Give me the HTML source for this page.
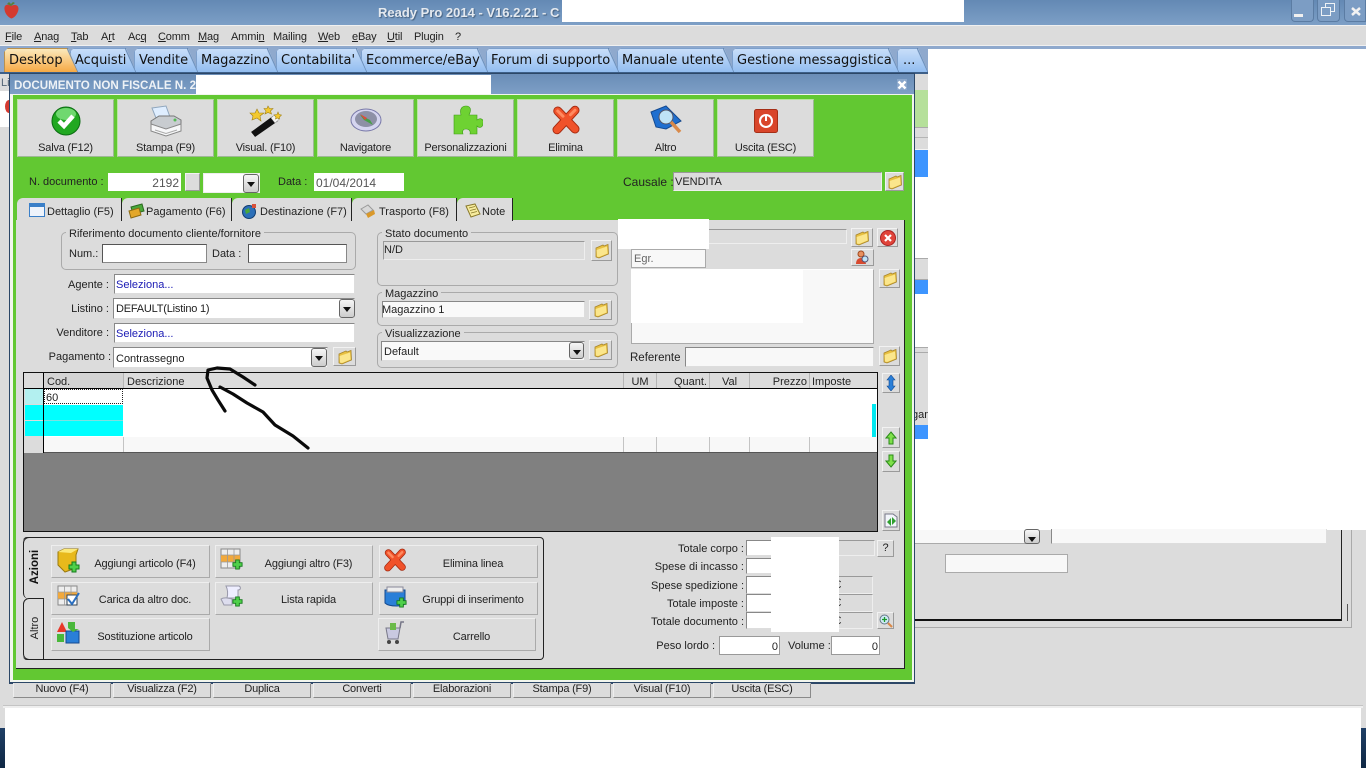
<!DOCTYPE html>
<html><head><meta charset="utf-8"><title>Ready Pro 2014</title>
<style>
html,body{margin:0;padding:0;width:1366px;height:768px;overflow:hidden;background:#dcdcdc}
body{position:relative;font:11px "Liberation Sans",sans-serif;color:#222}
div,span,svg{position:absolute;box-sizing:border-box}
.t{white-space:nowrap;line-height:14px;height:14px;margin-top:1px}
.r{text-align:right}
.c{text-align:center}
.m{top:29px;font-size:11px;letter-spacing:-.15px}
.m u{text-decoration:underline}
.tab{top:48px;height:24px;font:13px "DejaVu Sans",sans-serif;line-height:23px;color:#111;white-space:nowrap;padding-left:4px;background:linear-gradient(#c8def9,#92bdf0);border:1px solid #7da0cc;border-bottom:0;clip-path:polygon(0 100%,0 4px,4px 0,calc(100% - 10px) 0,100% 100%)}
.tab:after{content:"";position:absolute;right:-1px;top:-1px;width:11px;height:24px;background:linear-gradient(to bottom left,transparent calc(50% - 1px),#5f82ad,transparent calc(50% + 1px))}
.b{background:#dcdcdc;border:1px solid;border-color:#f2f2f2 #9a9a9a #9a9a9a #f2f2f2}
.tb{top:99px;width:97px;height:58px;background:#dcdcdc;border:1px solid;border-color:#b8e6a0 #9fb896 #9fb896 #b8e6a0}
.tb .l{left:0;right:0;top:41px;text-align:center;white-space:nowrap;line-height:14px;color:#222;letter-spacing:-.2px}
.tb svg{left:31px;top:5px}
.in{background:#fff;border:1px solid;border-color:#888 #ddd #ddd #888}
.g{background:#dcdcdc;border:1px solid;border-color:#999 #eee #eee #999}
.grp{border:1px solid #aaa;border-radius:5px}
.lab{background:#dcdcdc;padding:0 3px;white-space:nowrap;line-height:13px;height:13px;font-size:11px;margin-top:1px}
.ar{width:16px;height:19px;background:linear-gradient(#f6f6f6,#ccc);border:1px solid #666;border-radius:3px}
.ar:after{content:"";position:absolute;left:3px;top:7px;border:4px solid transparent;border-top:5px solid #111;border-bottom:0}
.dt{top:198px;height:23px;background:#dcdcdc;border-right:1px solid #222;border-radius:6px 0 0 0}
.dt .t{top:6px}
.col{top:373px;width:1px;height:15px;background:#b5b5b5}
.col2{top:437px;width:1px;height:15px;background:#c4c4c4}
.ab{height:33px;background:#dcdcdc;border:1px solid;border-color:#eee #aaa #aaa #eee}
.ab .t{top:10px;text-align:center;letter-spacing:-.15px}
.ab svg{left:3px;top:1px}
.bb{top:683px;height:15px;width:98px;background:#dcdcdc;border:1px solid;border-color:#dcdcdc #8a8a8a #8a8a8a #eee;text-align:center;line-height:10px;font-size:11px;letter-spacing:-.2px}
</style></head><body>
<svg width="0" height="0" style="position:absolute"><defs>
<symbol id="fo" viewBox="0 0 16 16"><path d="M2 5L9 2L10 3L14 1.500L14.500 11L5 15L2 14Z" fill="#e8c040" stroke="#a8862c" stroke-width=".8"/><path d="M2.500 7L13 3.500L13.500 10.500L5 14L3 13.500Z" fill="#fbe68c"/></symbol>
<symbol id="plus" viewBox="0 0 12 12"><path d="M4 1h4v3h3v4H8v3H4V8H1V4h3z" fill="#4fd04a" stroke="#157a1c"/></symbol>
<symbol id="x" viewBox="0 0 40 40"><path d="M8 33L32 7M9 8L32 32" fill="none" stroke="#a52a10" stroke-width="12" stroke-linecap="round"/><path d="M8 33L32 7M9 8L32 32" fill="none" stroke="#f0522a" stroke-width="9.500" stroke-linecap="round"/><path d="M9 8L16 15M26 13L32 7" stroke="#ff8a60" stroke-width="4" stroke-linecap="round"/></symbol>
</defs></svg>

<!-- title bar -->
<div style="left:0;top:0;width:1366px;height:25px;background:linear-gradient(#6389b4,#7d9fc6)"></div>
<svg style="left:3px;top:1px" width="17" height="18" viewBox="0 0 17 18"><path d="M8 5C3 2 1 5 1.500 8.500C2 13 6 17 8.500 17.500C11 17 15 13 15.500 8C15.500 4 12 3 8 5Z" fill="#d43a30"/><path d="M4 3L8 5L12 2L10 1L8 3L6 1Z" fill="#57803a"/></svg>
<div class="t" style="left:378px;top:4px;font:bold 13px 'Liberation Sans',sans-serif;color:#e4e9ef;text-shadow:1px 1px 1px #45607f">Ready Pro 2014 - V16.2.21 - C</div>
<div style="left:562px;top:0;width:402px;height:22px;background:#fff"></div>
<div style="left:1291px;top:0;width:23px;height:22px;border:1px solid #5b7ca3;border-top:0;border-radius:0 0 4px 4px;background:#7c9dc4"></div>
<div style="left:1294px;top:14px;width:9px;height:3px;background:#f0f0f0"></div>
<div style="left:1317px;top:0;width:23px;height:22px;border:1px solid #5b7ca3;border-top:0;border-radius:0 0 4px 4px;background:#7c9dc4"></div>
<div style="left:1325px;top:3px;width:10px;height:9px;border:1.500px solid #eef2f6"></div>
<div style="left:1321px;top:7px;width:10px;height:9px;border:1.500px solid #eef2f6;background:#7c9dc4"></div>
<div style="left:1344px;top:0;width:22px;height:22px;border:1px solid #5b7ca3;border-top:0;border-radius:0 0 0 4px;background:#7c9dc4"></div>
<svg style="left:1351px;top:7px" width="10" height="9" viewBox="0 0 10 9"><path d="M1 1L9 8M9 1L1 8" stroke="#f2f2f2" stroke-width="2.500"/></svg>

<!-- menu -->
<div style="left:0;top:25px;width:1366px;height:21px;background:#dcdcdc;border-top:1px solid #f0f0f0;border-bottom:1px solid #f0f0f0"></div>
<div style="left:0;top:46px;width:1366px;height:27px;background:#8fa9cd"></div>
<div class="t m" style="left:5px"><u>F</u>ile</div>
<div class="t m" style="left:34px"><u>A</u>nag</div>
<div class="t m" style="left:71px"><u>T</u>ab</div>
<div class="t m" style="left:101px">A<u>r</u>t</div>
<div class="t m" style="left:128px">Ac<u>q</u></div>
<div class="t m" style="left:158px"><u>C</u>omm</div>
<div class="t m" style="left:198px"><u>M</u>ag</div>
<div class="t m" style="left:231px">Ammi<u>n</u></div>
<div class="t m" style="left:273px">Mailin<u>g</u></div>
<div class="t m" style="left:318px"><u>W</u>eb</div>
<div class="t m" style="left:352px"><u>e</u>Bay</div>
<div class="t m" style="left:387px"><u>U</u>til</div>
<div class="t m" style="left:414px">Plugin</div>
<div class="t m" style="left:455px">?</div>

<!-- background window -->
<div style="left:0;top:72px;width:929px;height:2px;background:#3d5f88"></div>
<div style="left:0;top:74px;width:929px;height:631px;background:#dcdcdc"></div>
<div class="t" style="left:1px;top:75px;color:#567">Li</div>
<div style="left:0;top:91px;width:9px;height:36px;background:#fff"></div>
<div style="left:5px;top:100px;width:8px;height:13px;background:#d43a30;border-radius:50%"></div>

<div style="left:914px;top:90px;width:15px;height:37px;background:#b5e09a"></div>
<div style="left:914px;top:127px;width:15px;height:23px;background:#dcdcdc;border-top:1px solid #aaa;border-bottom:1px solid #f4f4f4"></div>
<div style="left:914px;top:137px;width:15px;height:1px;background:#b5b5b5"></div>
<div style="left:914px;top:150px;width:15px;height:27px;background:#3d95ff"></div>
<div style="left:914px;top:177px;width:15px;height:81px;background:#fff"></div>
<div style="left:914px;top:258px;width:15px;height:22px;background:#dcdcdc;border-top:1px solid #aaa;border-bottom:1px solid #aaa"></div>
<div style="left:914px;top:280px;width:15px;height:14px;background:#3d95ff"></div>
<div style="left:914px;top:294px;width:15px;height:53px;background:#fff"></div>
<div style="left:914px;top:347px;width:15px;height:60px;background:#dcdcdc;border-top:1px solid #aaa"></div>
<div style="left:914px;top:352px;width:15px;height:1px;background:#aaa"></div>
<div style="left:914px;top:407px;width:15px;height:18px;background:#dcdcdc;overflow:hidden"><span class="t" style="left:-2px;top:0">gam</span></div>
<div style="left:914px;top:425px;width:15px;height:14px;background:#3d95ff"></div>
<div style="left:914px;top:439px;width:15px;height:91px;background:#fff"></div>

<!-- white redaction right -->
<div style="left:928px;top:49px;width:438px;height:481px;background:#fff"></div>

<!-- tabs -->
<div class="tab" style="left:897px;width:31px;padding-left:5px">...</div>
<div class="tab" style="left:732px;width:167px">Gestione messaggistica</div>
<div class="tab" style="left:617px;width:117px">Manuale utente</div>
<div class="tab" style="left:486px;width:133px">Forum di supporto</div>
<div class="tab" style="left:361px;width:127px">Ecommerce/eBay</div>
<div class="tab" style="left:276px;width:91px">Contabilita'</div>
<div class="tab" style="left:196px;width:82px">Magazzino</div>
<div class="tab" style="left:134px;width:64px">Vendite</div>
<div class="tab" style="left:70px;width:66px">Acquisti</div>
<div class="tab" style="left:4px;width:74px;background:linear-gradient(#fbe9bc,#f6a945);border-color:#b9914f">Desktop</div>

<!-- dialog -->
<div style="left:9px;top:73px;width:906px;height:611px;background:#f2f6ee;border:1px solid #2c4767"></div>
<div style="left:10px;top:74px;width:904px;height:20px;background:linear-gradient(#6a8db7,#7d9fc6)"></div>
<div class="t" style="left:14px;top:78px;font-weight:bold;font-size:11.600px;color:#eef2f6">DOCUMENTO NON FISCALE N. 2</div>
<div style="left:196px;top:75px;width:295px;height:19px;background:#fff"></div>
<div style="left:897px;top:79px;width:10px;height:11px;background:#8aa7cb"></div>
<svg style="left:897px;top:80px" width="10" height="10" viewBox="0 0 10 10"><path d="M1.500 1.500L8.500 8.500M8.500 1.500L1.500 8.500" stroke="#fff" stroke-width="2.500"/></svg>

<div style="left:13px;top:95px;width:899px;height:585px;background:#62c832"></div>

<!-- toolbar -->
<div class="tb" style="left:17px"><svg width="32" height="32" viewBox="0 0 32 32"><circle cx="17" cy="16" r="14" fill="#21a821" stroke="#0b6c12"/><ellipse cx="17" cy="9" rx="10" ry="6" fill="#6fd86f"/><path d="M10 16L15 21L24 11" fill="none" stroke="#fff" stroke-width="4.500"/></svg><div class="l">Salva (F12)</div></div>
<div class="tb" style="left:117px"><svg width="34" height="34" viewBox="0 0 34 34"><path d="M3 3L17 1L21 12L7 13Z" fill="#dfeeff" stroke="#8fa6bd"/><path d="M2 16L10 11H25L32 15V22L17 26L2 21Z" fill="#c8ccd0" stroke="#777"/><path d="M2 19L17 24L32 19V26L17 31L2 26Z" fill="#f7f8f9" stroke="#888"/><path d="M6 25L17 28.500L28 25" fill="none" stroke="#aaa"/><circle cx="26" cy="15" r="1.500" fill="#55bb55"/></svg><div class="l">Stampa (F9)</div></div>
<div class="tb" style="left:217px"><svg width="34" height="34" viewBox="0 0 34 34"><path d="M2 27L24 11L29 16L6 32Z" fill="#111"/><path d="M22 13L26 9.500L30 14.500L26 18Z" fill="#f2f2f2" stroke="#999" stroke-width=".5"/><path d="M2 27L6 32L3.500 32L1.500 29.500Z" fill="#ddd"/><path d="M8 4L10 8H15L11 11L12 16L8 13L3 15L4 11L1 8H6Z" fill="#f3c92f" stroke="#a08015" stroke-width=".6"/><path d="M19 1L20.500 3.500H24L21.500 6L22.500 9L19 7.500L16 9L17 6L15 3.500H18Z" fill="#f3c92f" stroke="#a08015" stroke-width=".6"/><path d="M29 7L30 9.500L32.500 10L30.500 12L30.500 14L28.500 13L26.500 14L27 12L25 10L28 9.500Z" fill="#f3c92f" stroke="#a08015" stroke-width=".6"/></svg><div class="l">Visual. (F10)</div></div>
<div class="tb" style="left:317px"><svg width="34" height="34" viewBox="0 0 34 34"><ellipse cx="17" cy="15" rx="15" ry="11" fill="#d5d5f0" stroke="#7878a8"/><ellipse cx="17" cy="14" rx="11" ry="8" fill="#8d90a6"/><path d="M11 10L21 15L24 20L15 15Z" fill="#47a047"/><path d="M11 9L18 13L16 15Z" fill="#e04a3a"/></svg><div class="l">Navigatore</div></div>
<div class="tb" style="left:417px"><svg width="34" height="32" viewBox="0 0 34 32"><path d="M5 10H12C10 3 14 1 17 1C21 1 23 4 20 10H28V15C32 12 35 15 34 18C34 22 31 24 28 21V29H21C22 25 19 24 17 24C14 24 13 26 14 29H5Z" fill="#6ed232" stroke="#3d9d15" stroke-width=".6"/></svg><div class="l">Personalizzazioni</div></div>
<div class="tb" style="left:517px"><svg width="30" height="30" viewBox="0 0 40 40" style="left:33px"><use href="#x"/></svg><div class="l">Elimina</div></div>
<div class="tb" style="left:617px"><svg width="34" height="34" viewBox="0 0 34 34"><path d="M2 7L17 1L32 16L17 24L7 22Z" fill="#1f6fd0" stroke="#154a90"/><circle cx="17" cy="12" r="7" fill="#bfe3f6" stroke="#556"/><path d="M22 17L31 27" stroke="#d98a4a" stroke-width="3.500"/></svg><div class="l">Altro</div></div>
<div class="tb" style="left:717px"><svg width="25" height="25" viewBox="0 0 25 25" style="left:36px;top:9px"><rect x=".5" y=".5" width="23" height="23" rx="2" fill="#d9452a" stroke="#a52e16"/><circle cx="12" cy="12" r="6" fill="none" stroke="#fff" stroke-width="2"/><path d="M12 6V12" stroke="#fff" stroke-width="2"/></svg><div class="l">Uscita (ESC)</div></div>

<!-- doc row -->
<div class="t" style="left:29px;top:174px">N. documento :</div>
<div style="left:108px;top:173px;width:73px;height:18px;background:#fff"></div>
<div class="t r" style="left:108px;top:175px;width:71px;color:#555;font-size:12px">2192</div>
<div class="b" style="left:185px;top:173px;width:15px;height:18px"></div>
<div style="left:203px;top:173px;width:57px;height:20px;background:#fff;border:1px solid #eee"></div>
<div class="ar" style="left:243px;top:174px"></div>
<div class="t" style="left:278px;top:174px">Data :</div>
<div style="left:314px;top:173px;width:90px;height:18px;background:#fff"></div>
<div class="t" style="left:316px;top:175px;color:#555;font-size:12px">01/04/2014</div>
<div class="t" style="left:623px;top:174px;font-size:12px">Causale :</div>
<div class="g" style="left:673px;top:172px;width:209px;height:19px"></div>
<div class="t" style="left:675px;top:174px">VENDITA</div>
<div class="b" style="left:885px;top:172px;width:19px;height:19px"><svg width="16" height="16" style="left:1px;top:1px"><use href="#fo"/></svg></div>

<!-- inner panel -->
<div style="left:16px;top:220px;width:889px;height:449px;background:#dcdcdc;border-right:1px solid #222;border-bottom:1px solid #222"></div>

<!-- inner tabs -->
<div class="dt" style="left:17px;width:105px"><svg width="17" height="15" viewBox="0 0 17 15" style="left:12px;top:5px"><rect x=".5" y=".5" width="15" height="13" fill="#eef3fb" stroke="#3a7fc8"/><rect x="1" y="1" width="14" height="3" fill="#3a7fc8"/></svg><div class="t" style="left:30px">Dettaglio (F5)</div></div>
<div class="dt" style="left:122px;width:110px"><svg width="17" height="16" viewBox="0 0 17 16" style="left:6px;top:5px"><path d="M3 4L14 1L16 8L5 11Z" fill="#49a83a" stroke="#2b6a20"/><path d="M1 8L11 5L13 12L3 15Z" fill="#e3a72a" stroke="#8c6a12"/></svg><div class="t" style="left:24px">Pagamento (F6)</div></div>
<div class="dt" style="left:232px;width:120px"><svg width="17" height="16" viewBox="0 0 17 16" style="left:9px;top:5px"><circle cx="8" cy="9" r="6.500" fill="#2c6fb8" stroke="#123d70"/><path d="M4 7L8 5L9 9L5 11Z" fill="#49a83a"/><rect x="11" y="1" width="4" height="4" fill="#d8503a"/></svg><div class="t" style="left:28px">Destinazione (F7)</div></div>
<div class="dt" style="left:352px;width:105px"><svg width="17" height="16" viewBox="0 0 17 16" style="left:8px;top:5px"><path d="M1 6L8 2L13 7L6 11Z" fill="#d8d8d8" stroke="#999"/><path d="M6 11L14 7L15 11L8 15Z" fill="#d9982a"/></svg><div class="t" style="left:27px">Trasporto (F8)</div></div>
<div class="dt" style="left:457px;width:56px"><svg width="17" height="16" viewBox="0 0 17 16" style="left:8px;top:5px"><path d="M1 3L10 1L15 11L6 14Z" fill="#f7ec9e" stroke="#8a7a2c"/><path d="M4 5L10 3.500M5 7.500L11 6M6 10L12 8.500" stroke="#8a7a2c" stroke-width=".7"/></svg><div class="t" style="left:25px">Note</div></div>

<!-- riferimento -->
<div class="grp" style="left:61px;top:232px;width:295px;height:38px"></div>
<div class="lab" style="left:66px;top:227px">Riferimento documento cliente/fornitore</div>
<div class="t" style="left:69px;top:246px">Num.:</div>
<div class="in" style="left:102px;top:244px;width:105px;height:19px;border-color:#555 #888 #888 #555"></div>
<div class="t" style="left:212px;top:246px">Data :</div>
<div class="in" style="left:248px;top:244px;width:99px;height:19px;border-color:#555 #888 #888 #555"></div>

<div class="t r" style="left:40px;top:277px;width:69px">Agente :</div>
<div class="in" style="left:114px;top:274px;width:241px;height:20px"></div>
<div class="t" style="left:116px;top:277px;color:#1a1ab4">Seleziona...</div>
<div class="t r" style="left:40px;top:301px;width:69px">Listino :</div>
<div class="in" style="left:113px;top:298px;width:242px;height:21px"></div>
<div class="t" style="left:116px;top:301px;letter-spacing:-.2px">DEFAULT(Listino 1)</div>
<div class="ar" style="left:339px;top:299px"></div>
<div class="t r" style="left:40px;top:325px;width:69px">Venditore :</div>
<div class="in" style="left:114px;top:323px;width:241px;height:20px"></div>
<div class="t" style="left:116px;top:326px;color:#1a1ab4">Seleziona...</div>
<div class="t r" style="left:30px;top:349px;width:81px">Pagamento :</div>
<div class="in" style="left:113px;top:347px;width:215px;height:21px"></div>
<div class="t" style="left:116px;top:351px">Contrassegno</div>
<div class="ar" style="left:311px;top:348px"></div>
<div class="b" style="left:333px;top:347px;width:23px;height:19px"><svg width="16" height="16" style="left:3px;top:1px"><use href="#fo"/></svg></div>

<!-- center groups -->
<div class="grp" style="left:377px;top:232px;width:241px;height:54px"></div>
<div class="lab" style="left:382px;top:227px">Stato documento</div>
<div class="g" style="left:383px;top:241px;width:202px;height:19px"></div>
<div class="t" style="left:384px;top:242px">N/D</div>
<div class="b" style="left:591px;top:240px;width:21px;height:21px"><svg width="16" height="16" style="left:2px;top:2px"><use href="#fo"/></svg></div>

<div class="grp" style="left:377px;top:292px;width:241px;height:34px"></div>
<div class="lab" style="left:382px;top:287px">Magazzino</div>
<div class="in" style="left:382px;top:301px;width:203px;height:17px;background:#f9f9f9"></div>
<div class="t" style="left:382px;top:302px">Magazzino 1</div>
<div class="b" style="left:589px;top:300px;width:23px;height:20px"><svg width="16" height="16" style="left:3px;top:1px"><use href="#fo"/></svg></div>

<div class="grp" style="left:377px;top:332px;width:241px;height:36px"></div>
<div class="lab" style="left:382px;top:327px">Visualizzazione</div>
<div class="in" style="left:381px;top:341px;width:204px;height:20px;background:#f9f9f9"></div>
<div class="t" style="left:384px;top:344px">Default</div>
<div class="ar" style="left:569px;top:342px;width:15px;height:17px"></div>
<div class="b" style="left:589px;top:340px;width:23px;height:20px"><svg width="16" height="16" style="left:3px;top:1px"><use href="#fo"/></svg></div>

<!-- right block -->
<div class="g" style="left:700px;top:229px;width:147px;height:15px"></div>
<div style="left:618px;top:219px;width:91px;height:30px;background:#fff"></div>
<div class="b" style="left:851px;top:228px;width:22px;height:19px"><svg width="16" height="16" style="left:2px;top:1px"><use href="#fo"/></svg></div>
<div class="b" style="left:877px;top:228px;width:21px;height:19px"><svg width="16" height="16" viewBox="0 0 16 16" style="left:2px;top:1px"><circle cx="8" cy="8" r="7.500" fill="#e0443a" stroke="#a22"/><path d="M5 5L11 11M11 5L5 11" stroke="#fff" stroke-width="2.200"/></svg></div>
<div class="in" style="left:631px;top:249px;width:75px;height:19px;background:#f8f8f8;border-color:#aaa"></div>
<div class="t" style="left:634px;top:251px;color:#666">Egr.</div>
<div class="b" style="left:851px;top:249px;width:23px;height:17px"><svg width="15" height="15" viewBox="0 0 15 15" style="left:3px;top:0"><circle cx="6" cy="4" r="3" fill="#e89060" stroke="#a04a20"/><path d="M1 14C1 9 4 8 6 8C8 8 10 9 11 14Z" fill="#d84a30"/><circle cx="10" cy="9" r="3" fill="#bfe3f6" stroke="#557"/></svg></div>
<div class="in" style="left:631px;top:269px;width:243px;height:75px;background:#f8f8f8;border-color:#fff #aaa #aaa #aaa"></div>
<div style="left:631px;top:269px;width:172px;height:54px;background:#fff"></div>
<div class="b" style="left:879px;top:269px;width:21px;height:19px"><svg width="16" height="16" style="left:2px;top:1px"><use href="#fo"/></svg></div>
<div class="t" style="left:630px;top:350px;font-size:11.500px">Referente</div>
<div class="in" style="left:685px;top:347px;width:189px;height:20px;background:#f8f8f8"></div>
<div class="b" style="left:879px;top:346px;width:21px;height:20px"><svg width="16" height="16" style="left:2px;top:1px"><use href="#fo"/></svg></div>

<!-- grid -->
<div style="left:23px;top:372px;width:855px;height:160px;background:#808080;border:1px solid #111"></div>
<div style="left:24px;top:373px;width:853px;height:15px;background:#dcdcdc"></div>
<div style="left:24px;top:388px;width:853px;height:1px;background:#000"></div>
<div style="left:24px;top:389px;width:853px;height:48px;background:#fff"></div>
<div style="left:24px;top:437px;width:853px;height:15px;background:#f8f8f8"></div>
<div style="left:24px;top:452px;width:853px;height:1px;background:#555"></div>
<div style="left:43px;top:373px;width:1px;height:80px;background:#000"></div>
<div style="left:24px;top:389px;width:19px;height:64px;background:#dcdcdc"></div>
<div style="left:25px;top:389px;width:18px;height:15px;background:#b3f0f0"></div>
<div style="left:25px;top:405px;width:18px;height:15px;background:#00ffff"></div>
<div style="left:25px;top:421px;width:18px;height:15px;background:#00ffff"></div>
<div style="left:44px;top:405px;width:79px;height:31px;background:#00ffff"></div>
<div style="left:44px;top:420px;width:79px;height:1px;background:#7de0e0"></div>
<div style="left:44px;top:389px;width:79px;height:15px;background:#fff;border:1px dotted #222"></div>
<div class="t" style="left:46px;top:390px">60</div>
<div style="left:44px;top:373px;width:79px;height:15px;background:#d4d4d4"></div>
<div class="col" style="left:123px"></div>
<div class="col2" style="left:123px"></div>
<div class="t" style="left:47px;top:374px">Cod.</div>
<div class="t" style="left:127px;top:374px;font-size:11px">Descrizione</div>
<div class="col" style="left:623px"></div><div class="col" style="left:656px"></div><div class="col" style="left:709px"></div><div class="col" style="left:749px"></div><div class="col" style="left:809px"></div>
<div class="col2" style="left:623px"></div><div class="col2" style="left:656px"></div><div class="col2" style="left:709px"></div><div class="col2" style="left:749px"></div><div class="col2" style="left:809px"></div>
<div class="t c" style="left:624px;top:374px;width:32px">UM</div>
<div class="t r" style="left:657px;top:374px;width:50px">Quant.</div>
<div class="t c" style="left:710px;top:374px;width:39px">Val</div>
<div class="t r" style="left:750px;top:374px;width:57px">Prezzo</div>
<div class="t" style="left:812px;top:374px">Imposte</div>
<div style="left:872px;top:404px;width:4px;height:33px;background:#00e8f0"></div>

<!-- side buttons -->
<div class="b" style="left:882px;top:373px;width:18px;height:20px"><svg width="10" height="16" viewBox="0 0 10 16" style="left:3px;top:1px"><path d="M5 0L9 5H7V11H9L5 16L1 11H3V5H1Z" fill="#2a7fd8" stroke="#154a90" stroke-width=".6"/></svg></div>
<div class="b" style="left:882px;top:427px;width:18px;height:21px"><svg width="12" height="14" viewBox="0 0 12 14" style="left:2px;top:3px"><path d="M6 1L11 7H8V13H4V7H1Z" fill="#7ee04a" stroke="#2a8a18"/></svg></div>
<div class="b" style="left:882px;top:451px;width:18px;height:21px"><svg width="12" height="14" viewBox="0 0 12 14" style="left:2px;top:2px"><path d="M6 13L11 7H8V1H4V7H1Z" fill="#7ee04a" stroke="#2a8a18"/></svg></div>
<div class="b" style="left:882px;top:510px;width:18px;height:21px"><svg width="15" height="15" viewBox="0 0 15 15" style="left:1px;top:2px"><path d="M1 1H9L13 4V14H1Z" fill="#f2f5fa" stroke="#778"/><path d="M3 9L7 5V13ZM12 8L8 12V4Z" fill="#2fa02f"/></svg></div>

<!-- actions -->
<div style="left:23px;top:537px;width:521px;height:123px;background:#dcdcdc;border:1px solid #222;border-left:0;border-radius:4px"></div>
<div style="left:23px;top:537px;width:21px;height:62px;background:#dcdcdc;border-left:1px solid #222;border-top:1px solid #222;border-radius:6px 0 0 6px"></div>
<div style="left:23px;top:598px;width:21px;height:62px;background:#dcdcdc;border:1px solid #222;border-radius:6px 0 0 6px"></div>
<div class="t c" style="left:13px;top:559px;width:44px;transform:rotate(-90deg);font-weight:bold;font-size:11.500px;color:#111">Azioni</div>
<div class="t c" style="left:13px;top:620px;width:44px;transform:rotate(-90deg);color:#222">Altro</div>

<div class="ab" style="left:51px;top:545px;width:159px"><svg width="26" height="26" viewBox="0 0 26 26"><path d="M3 5L9 2H23L21 8V21L10 25L3 18Z" fill="#e8b91c" stroke="#9a7a10"/><path d="M3 5L9 2H23L16 6Z" fill="#fbe97a"/><use href="#plus" x="13" y="14" width="12" height="12"/></svg><div class="t" style="left:0;width:100%;padding-left:29px">Aggiungi articolo (F4)</div></div>
<div class="ab" style="left:215px;top:545px;width:158px"><svg width="24" height="24" viewBox="0 0 24 24" style="left:4px"><rect x="1" y="2" width="19" height="19" fill="#eee" stroke="#888"/><rect x="1" y="8" width="19" height="7" fill="#f2a93c"/><path d="M7.500 2V21M14 2V21M1 8H20M1 15H20" stroke="#999" stroke-width=".8"/><use href="#plus" x="12" y="12" width="11" height="11"/></svg><div class="t" style="left:0;width:100%;padding-left:29px">Aggiungi altro (F3)</div></div>
<div class="ab" style="left:379px;top:545px;width:159px"><svg width="24" height="26" viewBox="0 0 40 40"><use href="#x"/></svg><div class="t" style="left:0;width:100%;padding-left:29px">Elimina linea</div></div>
<div class="ab" style="left:51px;top:582px;width:159px"><svg width="24" height="24" viewBox="0 0 24 24" style="left:5px"><rect x="1" y="2" width="19" height="19" fill="#eee" stroke="#888"/><rect x="1" y="8" width="19" height="7" fill="#f2a93c"/><path d="M7.500 2V21M14 2V21M1 8H20M1 15H20" stroke="#999" stroke-width=".8"/><rect x="10" y="11" width="10" height="10" fill="#fff" stroke="#345"/><path d="M11 15L15 20L22 9" fill="none" stroke="#2a6fc0" stroke-width="2"/></svg><div class="t" style="left:0;top:9px;width:100%;padding-left:29px">Carica da altro doc.</div></div>
<div class="ab" style="left:215px;top:582px;width:158px"><svg width="25" height="25" viewBox="0 0 25 25" style="left:3px"><path d="M7 2H20C22 3 22 6 19 6V14H8C9 10 9 6 7 2Z" fill="#eef" stroke="#99a"/><path d="M2 15C5 13 9 14 13 15V21H5Z" fill="#dde" stroke="#99a"/><use href="#plus" x="13" y="12" width="11" height="11"/></svg><div class="t" style="left:0;top:9px;width:100%;padding-left:29px">Lista rapida</div></div>
<div class="ab" style="left:379px;top:582px;width:159px"><svg width="25" height="25" viewBox="0 0 25 25"><path d="M2 6H22V19C22 23 6 23 2 19Z" fill="#2a7fd8" stroke="#154a90"/><path d="M4 3H20V8H4Z" fill="#eee" stroke="#889"/><use href="#plus" x="13" y="13" width="11" height="11"/></svg><div class="t" style="left:0;top:9px;width:100%;padding-left:29px">Gruppi di inserimento</div></div>
<div class="ab" style="left:51px;top:618px;width:159px"><svg width="26" height="26" viewBox="0 0 26 26"><path d="M2 12L7 2L12 12Z" fill="#e8382a"/><rect x="11" y="11" width="13" height="12" fill="#2a7fd8" stroke="#154a90"/><path d="M13 2H20V9H24L18 12L13 8Z" fill="#49b83a"/><path d="M2 14H9V22H2Z" fill="#49b83a"/></svg><div class="t" style="left:0;width:100%;padding-left:29px">Sostituzione articolo</div></div>
<div class="ab" style="left:378px;top:618px;width:158px"><svg width="24" height="26" viewBox="0 0 24 26" style="left:4px"><path d="M3 8H17L15 19H5Z" fill="#c9c9e0" stroke="#778"/><path d="M17 8L18 2H21" fill="none" stroke="#778" stroke-width="1.500"/><circle cx="6" cy="22" r="2" fill="#444"/><circle cx="14" cy="22" r="2" fill="#444"/><rect x="7" y="3" width="6" height="7" fill="#6cbb4a"/></svg><div class="t" style="left:0;width:100%;padding-left:29px">Carrello</div></div>

<!-- totals -->
<div class="t r" style="left:620px;top:541px;width:124px">Totale corpo :</div>
<div class="t r" style="left:620px;top:559px;width:124px">Spese di incasso :</div>
<div class="t r" style="left:620px;top:578px;width:124px">Spese spedizione :</div>
<div class="t r" style="left:620px;top:596px;width:124px">Totale imposte :</div>
<div class="t r" style="left:620px;top:614px;width:124px">Totale documento :</div>
<div class="g" style="left:746px;top:540px;width:129px;height:16px"></div>
<div class="in" style="left:746px;top:540px;width:30px;height:16px"></div>
<div class="in" style="left:746px;top:558px;width:30px;height:16px"></div>
<div class="g" style="left:746px;top:576px;width:127px;height:18px"></div>
<div class="in" style="left:746px;top:576px;width:30px;height:18px"></div>
<div class="g" style="left:746px;top:594px;width:127px;height:18px"></div>
<div class="in" style="left:746px;top:594px;width:30px;height:18px"></div>
<div class="g" style="left:746px;top:612px;width:127px;height:17px"></div>
<div class="in" style="left:746px;top:612px;width:30px;height:17px"></div>
<div class="t" style="left:835px;top:577px">€</div>
<div class="t" style="left:835px;top:595px">€</div>
<div class="t" style="left:835px;top:613px">€</div>
<div style="left:771px;top:537px;width:68px;height:95px;background:#fff"></div>
<div class="b" style="left:877px;top:540px;width:17px;height:17px;text-align:center;line-height:15px">?</div>
<div class="b" style="left:877px;top:612px;width:17px;height:17px"><svg width="14" height="14" viewBox="0 0 14 14" style="left:1px;top:1px"><circle cx="5.500" cy="5.500" r="4.500" fill="#cfeaf6" stroke="#678"/><path d="M5.500 3V8M3 5.500H8" stroke="#1a9a2a" stroke-width="1.300"/><path d="M9 9L13 13" stroke="#d98a4a" stroke-width="2.200"/></svg></div>
<div class="t r" style="left:640px;top:638px;width:75px">Peso lordo :</div>
<div class="in" style="left:719px;top:636px;width:61px;height:19px;border-color:#999"></div>
<div class="t r" style="left:720px;top:639px;width:58px">0</div>
<div class="t" style="left:788px;top:638px">Volume :</div>
<div class="in" style="left:831px;top:636px;width:49px;height:19px;border-color:#999"></div>
<div class="t r" style="left:832px;top:639px;width:46px">0</div>

<!-- hand-drawn arrow -->
<svg style="left:0;top:0" width="1366" height="768" viewBox="0 0 1366 768"><g fill="none" stroke="#0a0a0a" stroke-width="3.200" stroke-linecap="round" stroke-linejoin="round"><path d="M255 385L243 377L230 369L217 368L208 370L207 378L212 390L218 400L225 411"/><path d="M220 387L233 394L247 403L263 412L275 425L293 436L308 448"/></g></svg>

<!-- bottom buttons -->
<div style="left:10px;top:682px;width:905px;height:1px;background:#2c4767"></div>
<div class="bb" style="left:13px">Nuovo (F4)</div>
<div class="bb" style="left:113px">Visualizza (F2)</div>
<div class="bb" style="left:213px">Duplica</div>
<div class="bb" style="left:313px">Converti</div>
<div class="bb" style="left:413px">Elaborazioni</div>
<div class="bb" style="left:513px">Stampa (F9)</div>
<div class="bb" style="left:613px">Visual (F10)</div>
<div class="bb" style="left:713px">Uscita (ESC)</div>

<!-- right background controls -->
<div style="left:915px;top:530px;width:451px;height:175px;background:#dcdcdc"></div>
<div style="left:915px;top:530px;width:117px;height:14px;background:#f8f8f8;border-bottom:1px solid #aaa"></div>
<div class="ar" style="left:1024px;top:529px;height:15px"></div>
<div class="in" style="left:1051px;top:529px;width:276px;height:15px;background:#f8f8f8;border-top:0"></div>
<div class="in" style="left:945px;top:554px;width:123px;height:19px;background:#f8f8f8;border-color:#aaa"></div>
<div style="left:915px;top:619px;width:427px;height:2px;background:#111"></div>
<div style="left:1341px;top:530px;width:1px;height:91px;background:#222"></div>
<div style="left:1347px;top:604px;width:1px;height:17px;background:#555"></div>
<div style="left:915px;top:627px;width:437px;height:1px;background:#aaa"></div>
<div style="left:1351px;top:530px;width:1px;height:97px;background:#aaa"></div>

<!-- status -->
<div style="left:3px;top:705px;width:1360px;height:3px;background:#eee;border-top:1px solid #c4c4c4"></div>
<div style="left:5px;top:708px;width:1356px;height:60px;background:#fff"></div>
<div style="left:0;top:728px;width:5px;height:40px;background:linear-gradient(#1f3f66,#0f2844)"></div>
<div style="left:1361px;top:728px;width:5px;height:40px;background:linear-gradient(#1f3f66,#0f2844)"></div>
</body></html>
